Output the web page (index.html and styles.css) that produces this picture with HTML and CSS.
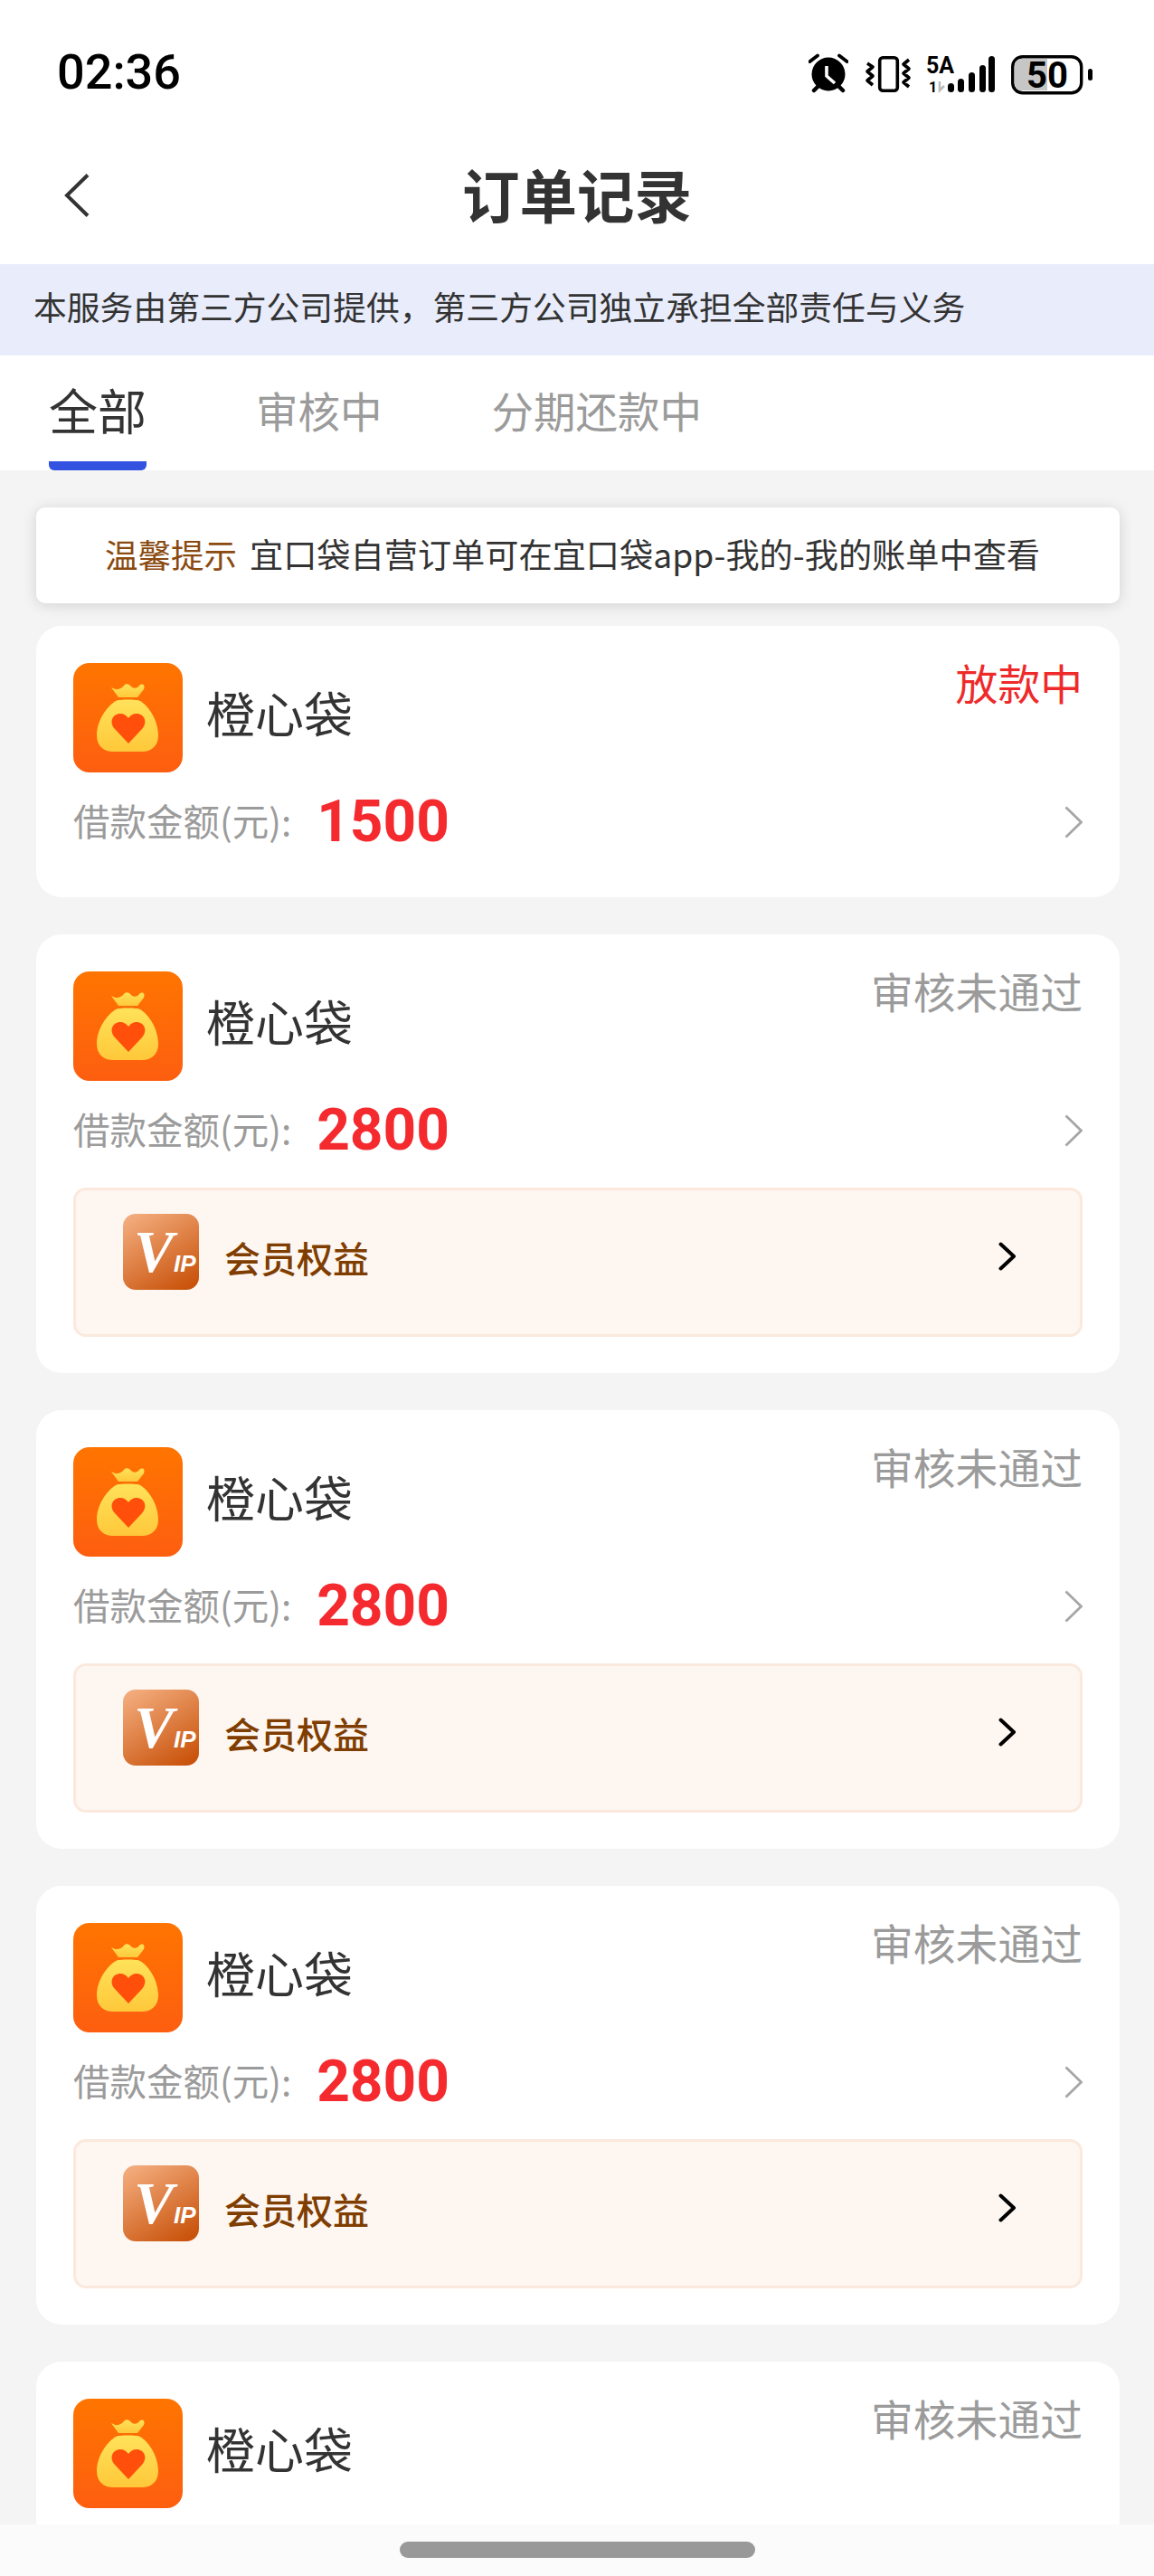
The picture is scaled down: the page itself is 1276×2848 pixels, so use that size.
FILE: index.html
```html
<!DOCTYPE html>
<html lang="zh-CN">
<head>
  <meta charset="UTF-8" />
  <title>订单记录</title>
  <link rel="stylesheet" href="styles.css">
</head>
<body>

  <svg class="defs" aria-hidden="true">
    <defs>
      <linearGradient id="bagBg" x1="0" y1="0" x2="0" y2="1">
        <stop offset="0" stop-color="#ff7500" />
        <stop offset="1" stop-color="#fd5e10" />
      </linearGradient>
      <linearGradient id="bagBody" x1="0" y1="0" x2="0" y2="1">
        <stop offset="0" stop-color="#ffe25a" />
        <stop offset="1" stop-color="#ffc83a" />
      </linearGradient>
      <linearGradient id="vipBg" x1="0.2" y1="0" x2="0.8" y2="1">
        <stop offset="0" stop-color="#f2aa7a" />
        <stop offset="1" stop-color="#c9530c" />
      </linearGradient>
      <symbol id="bag" viewBox="0 0 121 121">
        <rect width="121" height="121" rx="18" fill="url(#bagBg)" />
        <path d="M42 27C47 30 52 30 56 25C58 22 62 23 64 26C67 29 71 28 73 25C76 22 80 24 78 29L71 38H50Z" fill="url(#bagBody)" />
        <path d="M47 42C50 40 71 40 74 42C84 48 94 64 94 80C94 92 86 98 76 98H44C34 98 26 92 26 80C26 64 37 48 47 42Z" fill="url(#bagBody)" />
        <path d="M61 89L46 73C39 65 44 56 52 56C56 56 59 58 61 61C63 58 66 56 70 56C78 56 83 65 76 73Z" fill="#ff4f0a" />
      </symbol>
      <symbol id="arrow" viewBox="0 0 20 36">
        <path d="M1.5 1.5L18.5 18L1.5 34.5" fill="none" stroke="#a6a6a6" stroke-width="2.8" />
      </symbol>
      <symbol id="arrowDark" viewBox="0 0 20 32">
        <path d="M2.5 2.5L17 16L2.5 29.5" fill="none" stroke="#000" stroke-width="4" stroke-linecap="round" stroke-linejoin="round" />
      </symbol>
    </defs>
  </svg>

  <div class="status-bar">
    <span class="time">02:36</span>
    <div class="status-icons">
      <svg class="ic-alarm" viewBox="0 0 44 44">
        <path d="M1.500 9L10 2.500M42.500 9L34 2.500" stroke="#000" stroke-width="3.800" stroke-linecap="round" />
        <circle cx="22" cy="23" r="18.500" fill="#000" />
        <path d="M6 41L11 36M38 41L33 36" stroke="#000" stroke-width="4.500" stroke-linecap="round" />
        <path d="M20 14V25L29 33" fill="none" stroke="#fff" stroke-width="3.600" />
      </svg>
      <svg class="ic-vibrate" viewBox="0 0 52 44">
        <rect x="16.700" y="4.700" width="19.600" height="36.600" rx="3.500" fill="none" stroke="#000" stroke-width="3.600" />
        <path d="M3 11L9 15L3 20L9 25L3 30L9 35M49 7L43 12L49 17L43 22L49 27L43 32L49 37" fill="none" stroke="#000" stroke-width="3.600" stroke-linejoin="round" />
      </svg>
      <svg class="ic-signal" viewBox="0 -6 80 56">
        <text x="1" y="22" class="sig-main">5A</text>
        <text x="4" y="43" class="sig-small">1</text>
        <path d="M16 31V41L21 36" fill="none" stroke="#bbb" stroke-width="2.500" />
        <rect x="25" y="33" width="7" height="10" rx="3.500" />
        <rect x="36" y="28" width="7" height="15" rx="3.500" />
        <rect x="48" y="21" width="7" height="22" rx="3.500" />
        <rect x="60" y="13" width="7" height="30" rx="3.500" />
        <rect x="70" y="3" width="7" height="40" rx="3.500" />
      </svg>
      <svg class="ic-battery" viewBox="0 -6 90 60">
        <rect x="1.700" y="3.700" width="76" height="40" rx="11" fill="#fff" stroke="#000" stroke-width="3.400" />
        <path d="M4 14C4 9 7 6 12 6H40V41H12C7 41 4 38 4 33Z" fill="#c6c6c6" />
        <text x="40" y="38" class="batt-num">50</text>
        <rect x="85" y="17" width="5" height="13" rx="2.500" />
      </svg>
    </div>
  </div>

  <header class="top-bar">
    <svg class="back" viewBox="0 0 30 50">
      <path d="M27 2.500L4 25L27 47.500" fill="none" stroke="#333" stroke-width="4" />
    </svg>
    <h1>订单记录</h1>
  </header>

  <div class="banner">本服务由第三方公司提供，第三方公司独立承担全部责任与义务</div>

  <nav class="tabs">
    <a class="tab active">全部</a>
    <a class="tab">审核中</a>
    <a class="tab">分期还款中</a>
  </nav>

  <main class="list">
    <div class="tip"><span class="tip-label">温馨提示</span>宜口袋自营订单可在宜口袋app-我的-我的账单中查看</div>

    <div class="card card-plain">
      <div class="card-top">
        <svg class="bag"><use href="#bag" /></svg>
        <span class="name">橙心袋</span>
        <span class="state state-red">放款中</span>
      </div>
      <div class="money">
        <span class="money-label">借款金额(元):</span>
        <span class="money-num">1500</span>
        <svg class="more"><use href="#arrow" /></svg>
      </div>
    </div>

    <div class="card">
      <div class="card-top">
        <svg class="bag"><use href="#bag" /></svg>
        <span class="name">橙心袋</span>
        <span class="state">审核未通过</span>
      </div>
      <div class="money">
        <span class="money-label">借款金额(元):</span>
        <span class="money-num">2800</span>
        <svg class="more"><use href="#arrow" /></svg>
      </div>
      <div class="vip-row">
        <svg class="vip-icon" viewBox="0 0 84 84">
          <rect width="84" height="84" rx="14" fill="url(#vipBg)" />
          <text x="12" y="64" class="vip-mark"><tspan class="vip-v">V</tspan><tspan class="vip-ip">IP</tspan></text>
        </svg>
        <span class="vip-text">会员权益</span>
        <svg class="vip-more"><use href="#arrowDark" /></svg>
      </div>
    </div>

    <div class="card">
      <div class="card-top">
        <svg class="bag"><use href="#bag" /></svg>
        <span class="name">橙心袋</span>
        <span class="state">审核未通过</span>
      </div>
      <div class="money">
        <span class="money-label">借款金额(元):</span>
        <span class="money-num">2800</span>
        <svg class="more"><use href="#arrow" /></svg>
      </div>
      <div class="vip-row">
        <svg class="vip-icon" viewBox="0 0 84 84">
          <rect width="84" height="84" rx="14" fill="url(#vipBg)" />
          <text x="12" y="64" class="vip-mark"><tspan class="vip-v">V</tspan><tspan class="vip-ip">IP</tspan></text>
        </svg>
        <span class="vip-text">会员权益</span>
        <svg class="vip-more"><use href="#arrowDark" /></svg>
      </div>
    </div>

    <div class="card">
      <div class="card-top">
        <svg class="bag"><use href="#bag" /></svg>
        <span class="name">橙心袋</span>
        <span class="state">审核未通过</span>
      </div>
      <div class="money">
        <span class="money-label">借款金额(元):</span>
        <span class="money-num">2800</span>
        <svg class="more"><use href="#arrow" /></svg>
      </div>
      <div class="vip-row">
        <svg class="vip-icon" viewBox="0 0 84 84">
          <rect width="84" height="84" rx="14" fill="url(#vipBg)" />
          <text x="12" y="64" class="vip-mark"><tspan class="vip-v">V</tspan><tspan class="vip-ip">IP</tspan></text>
        </svg>
        <span class="vip-text">会员权益</span>
        <svg class="vip-more"><use href="#arrowDark" /></svg>
      </div>
    </div>

    <div class="card">
      <div class="card-top">
        <svg class="bag"><use href="#bag" /></svg>
        <span class="name">橙心袋</span>
        <span class="state">审核未通过</span>
      </div>
    </div>
  </main>

  <div class="home-bar"><span class="home-pill"></span></div>

</body>
</html>
```

FILE: styles.css
```css
* {
  box-sizing: border-box;
}
html, body {
  margin: 0;
  height: 2848px;
  overflow: hidden;
}
body {
  display: flex;
  flex-direction: column;
  background-color: #fff;
  color: #333;
  font-family: "Noto Sans CJK SC", "Noto Sans", sans-serif;
}
.defs {
  width: 0;
  height: 0;
  overflow: hidden;
  flex: none;
}

/* status bar */
.status-bar {
  flex: none;
  height: 150px;
  padding: 56px 68px 0 63px;
  display: flex;
  justify-content: space-between;
  align-items: flex-start;
}
.time {
  font-family: Roboto, sans-serif;
  font-weight: 500;
  font-size: 54px;
  line-height: 48px;
  color: #000;
}
.status-icons {
  display: flex;
  align-items: flex-start;
  margin-top: 3px;
}
.ic-alarm {
  width: 44px;
  height: 44px;
  margin-right: 18px;
}
.ic-vibrate {
  width: 52px;
  height: 44px;
  margin-right: 15px;
}
.ic-signal {
  width: 80px;
  height: 56px;
  margin: -6px 15px 0 0;
}
.ic-battery {
  width: 90px;
  height: 60px;
  margin-top: -6px;
}
.sig-main {
  font: 700 25px Roboto, sans-serif;
}
.sig-small {
  font: 700 16px Roboto, sans-serif;
}
.batt-num {
  font: 700 40px Roboto, sans-serif;
  text-anchor: middle;
}

/* title */
.top-bar {
  flex: none;
  height: 142px;
  position: relative;
  display: flex;
  align-items: center;
  justify-content: center;
}
.top-bar h1 {
  margin: 0 0 17px;
  font-size: 63.500px;
  line-height: 80px;
  font-weight: 700;
  color: #333;
}
.back {
  position: absolute;
  left: 70px;
  top: 41px;
  width: 30px;
  height: 50px;
}

.banner {
  flex: none;
  height: 101px;
  padding-left: 37px;
  background-color: #e9edfb;
  font-size: 36.800px;
  line-height: 92px;
  color: #333;
}

/* tabs */
.tabs {
  flex: none;
  height: 127px;
  display: flex;
  align-items: flex-start;
  padding-left: 54px;
}
.tab {
  font-size: 46.500px;
  line-height: 60px;
  margin-top: 30px;
  margin-right: 121px;
  color: #9b9b9b;
}
.tab.active {
  font-size: 54px;
  color: #333;
  height: 97px;
  border-bottom: 10px solid #3352e0;
  border-radius: 0 0 6px 6px;
}

/* list */
.list {
  flex: 1;
  min-height: 0;
  overflow: hidden;
  background-color: #f4f4f4;
  padding: 41px 38px 0 40px;
}
.tip {
  height: 106px;
  background-color: #fff;
  border-radius: 10px;
  box-shadow: 0 2px 16px rgba(0,0,0,0.14);
  font-size: 37.200px;
  line-height: 102px;
  text-align: center;
  padding-right: 12px;
  color: #333;
  margin-bottom: 25px;
}
.tip-label {
  font-size: 36.500px;
  color: #8a4a10;
  margin-right: 14px;
}
.card {
  background-color: #fff;
  border-radius: 28px;
  padding: 41px 41px 40px;
  margin-bottom: 41px;
}
.card-plain {
  padding-bottom: 50px;
}
.card-top {
  display: flex;
  align-items: flex-start;
  height: 121px;
}
.bag {
  width: 121px;
  height: 121px;
  flex: none;
}
.name {
  margin: 20px 0 0 26px;
  font-size: 54px;
  line-height: 70px;
  color: #333;
}
.state {
  margin-left: auto;
  margin-top: -9px;
  font-size: 46.800px;
  line-height: 60px;
  color: #9b9b9b;
}
.state-red {
  color: #ee2a2a;
}
.money {
  height: 70px;
  margin-top: 18px;
  display: flex;
  align-items: center;
}
.money-label {
  font-size: 40.500px;
  color: #9b9b9b;
  line-height: 60px;
}
.money-num {
  margin: 3px 0 0 28px;
  font-family: Roboto, sans-serif;
  font-weight: 700;
  font-size: 64px;
  line-height: 65px;
  color: #f42a2f;
}
.more {
  margin: 4px 0 0 auto;
  width: 20px;
  height: 36px;
}
.vip-row {
  margin-top: 30px;
  height: 165px;
  display: flex;
  align-items: center;
  padding: 0 70px 0 52px;
  background-color: #fdf6f1;
  border: 3px solid #fbe9dd;
  border-radius: 14px;
}
.vip-icon {
  width: 84px;
  height: 84px;
  flex: none;
  margin-bottom: 24px;
}
.vip-text {
  margin: 0 0 12px 28px;
  font-size: 40px;
  line-height: 60px;
  font-weight: 500;
  color: #7f3d00;
}
.vip-more {
  margin: 0 0 14px auto;
  width: 20px;
  height: 32px;
}
.vip-mark {
  fill: #fff;
  font-weight: 700;
  font-style: italic;
}
.vip-v {
  font-family: "Liberation Serif", serif;
  font-size: 66px;
}
.vip-ip {
  font-family: "Liberation Sans", sans-serif;
  font-size: 26px;
}

/* bottom */
.home-bar {
  flex: none;
  height: 57px;
  display: flex;
  justify-content: center;
  padding-top: 19px;
  background-color: #fbfbfb;
}
.home-pill {
  width: 393px;
  height: 18px;
  border-radius: 9px;
  background-color: #999;
}
```
